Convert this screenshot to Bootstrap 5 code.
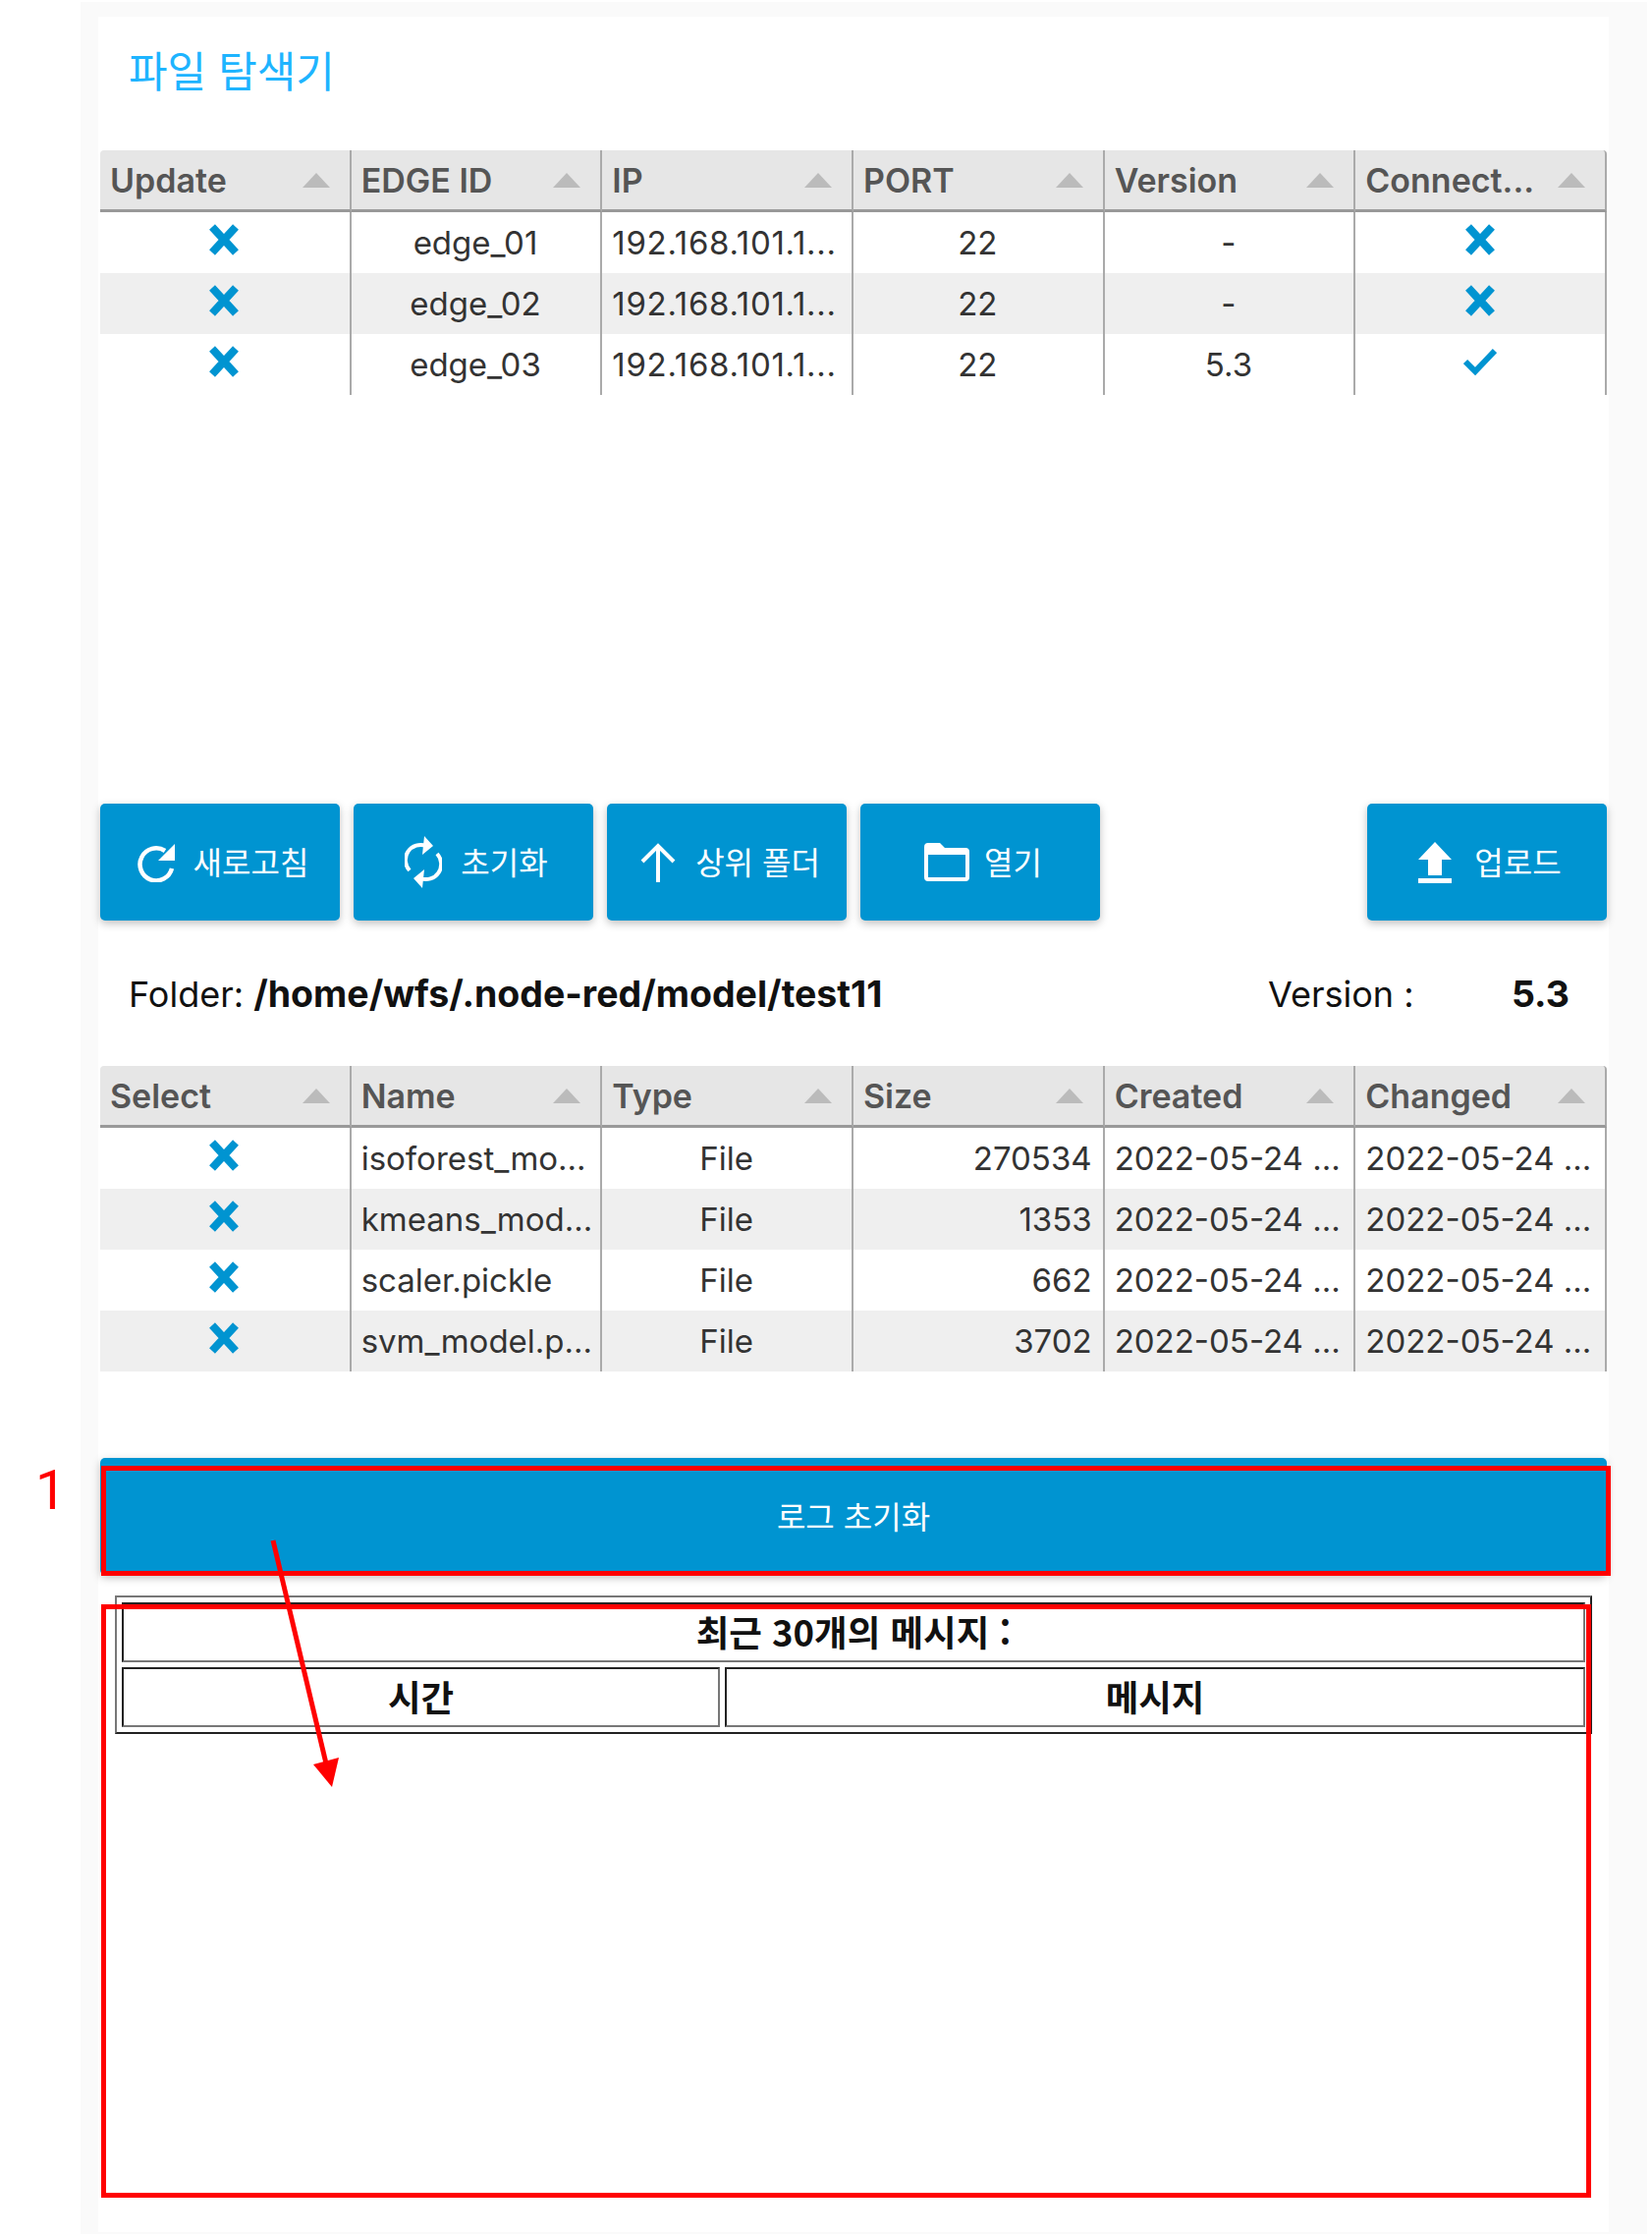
<!DOCTYPE html>
<html lang="ko">
  <head>
    <meta charset="UTF-8" />
    <meta name="viewport" content="width=device-width, initial-scale=1.0" />
    <title>파일 탐색기</title>
    <link
      rel="stylesheet"
      href="https://cdn.jsdelivr.net/npm/bootstrap@5.3.0/dist/css/bootstrap.min.css"
    />
    <style>
      html, body { height: 2277px; overflow: hidden; }
      body {
        position: relative;
        background: #fff;
        font-family: Inter, "Noto Sans CJK KR", sans-serif;
        color: #111;
      }
      .panel-shell { margin: 2px 5px 3px 82px; height: 2272px; padding: 15px 39px 2px 18px; background: #fafafa; }
      .panel-inner { background: #fff; height: 100%; padding: 0 2px 0 2px; }
      .title-text { height: 136px; padding: 28px 0 0 29px; margin: 0; color: #1eb4ff; font-size: 43px; font-weight: 400; font-family: "Noto Sans CJK KR", sans-serif; }
      .grid-table { width: 100%; table-layout: fixed; margin: 0; border-collapse: separate; border-spacing: 0; font-size: 33px; }
      .grid-table th {
        height: 63px; padding: 0 11px 0 10px; background: #e6e6e6; color: #555; font-weight: 600; font-size: 34px;
        border-right: 2px solid #aaa; border-bottom: 3px solid #999; white-space: nowrap;
      }
      .grid-table th:first-child { border-top-left-radius: 4px; }
      .grid-table th:last-child { border-top-right-radius: 4px; }
      .grid-table td { height: 62px; padding: 2px 11px 0 10px; color: #333; border-right: 2px solid #aaa; white-space: nowrap; overflow: hidden; }
      .grid-table tr:nth-child(even) td { background: #efefef; }
      .grid-table .ip-cell { letter-spacing: .7px; }
      .grid-top { height: 249px; margin-bottom: 416px; }
      .sort-mark { width: 0; height: 0; flex: none; margin-right: 9px; border-left: 14px solid transparent; border-right: 14px solid transparent; border-bottom: 15px solid #bbb; }
      .state-icon { display: block; margin: -9px auto 0; width: 34px; height: 34px; }
      .tool-btn {
        width: 244px; height: 119px; border: 0; border-radius: 5px; background: #0094d1; color: #fff; padding: 0 0 3px;
        font-size: 32px; font-family: "Noto Sans CJK KR", sans-serif; box-shadow: 0 3px 8px rgba(0, 0, 0, .25);
      }
      .tool-btn.icon-btn { gap: 19px; padding: 0 0 3px 6px; }
      .tool-btn.icon-btn.gap-narrow { gap: 15px; }
      .tool-btn.icon-btn.gap-wide { gap: 23px; }
      .tool-btn svg { flex: none; margin-top: 3px; }
      .tool-row { gap: 14px; }
      .folder-line { height: 148px; padding: 2px 38px 0 29px; font-size: 36px; }
      .folder-line b { font-size: 37.5px; }
      .version-key { width: 248px; }
      .wide-btn { height: 119px; width: 100%; margin-top: 88px; }
      .log-table { width: calc(100% - 30px); margin: 21px 0 0 15px; border: 2px outset #777; border-collapse: separate; border-spacing: 5px; font-size: 36.5px; font-weight: 700; font-family: "Noto Sans CJK KR", sans-serif; }
      .log-table td { height: 61px; padding: 0; text-align: center; border: 2px inset #777; line-height: 1; }
      .log-table .time-col { width: 609px; }
      .note-num { position: absolute; left: 36px; top: 1484px; color: #f00; font: 56px Roboto, sans-serif; }
      .note-box { position: absolute; border: 5px solid #f00; }
      .note-box.first { left: 103px; top: 1492px; width: 1537px; height: 112px; }
      .note-box.second { left: 103px; top: 1633px; width: 1517px; height: 604px; }
      .note-arrow { position: absolute; left: 0; top: 0; }
    </style>
  </head>
  <body>
    <div class="panel-shell">
      <div class="panel-inner">
        <h1 class="title-text">파일 탐색기</h1>

        <div class="grid-top">
          <table class="grid-table">
            <thead>
              <tr>
                <th><div class="d-flex justify-content-between align-items-center">Update<span class="sort-mark"></span></div></th>
                <th><div class="d-flex justify-content-between align-items-center">EDGE ID<span class="sort-mark"></span></div></th>
                <th><div class="d-flex justify-content-between align-items-center">IP<span class="sort-mark"></span></div></th>
                <th><div class="d-flex justify-content-between align-items-center">PORT<span class="sort-mark"></span></div></th>
                <th><div class="d-flex justify-content-between align-items-center">Version<span class="sort-mark"></span></div></th>
                <th><div class="d-flex justify-content-between align-items-center">Connect...<span class="sort-mark"></span></div></th>
              </tr>
            </thead>
            <tbody>
              <tr>
                <td><svg class="state-icon" viewBox="0 0 34 34"><path d="M5 4 29 30M29 4 5 30" fill="none" stroke="#0094d1" stroke-width="8" /></svg></td>
                <td class="text-center">edge_01</td><td class="ip-cell">192.168.101.1...</td><td class="text-center">22</td><td class="text-center">-</td>
                <td><svg class="state-icon" viewBox="0 0 34 34"><path d="M5 4 29 30M29 4 5 30" fill="none" stroke="#0094d1" stroke-width="8" /></svg></td>
              </tr>
              <tr>
                <td><svg class="state-icon" viewBox="0 0 34 34"><path d="M5 4 29 30M29 4 5 30" fill="none" stroke="#0094d1" stroke-width="8" /></svg></td>
                <td class="text-center">edge_02</td><td class="ip-cell">192.168.101.1...</td><td class="text-center">22</td><td class="text-center">-</td>
                <td><svg class="state-icon" viewBox="0 0 34 34"><path d="M5 4 29 30M29 4 5 30" fill="none" stroke="#0094d1" stroke-width="8" /></svg></td>
              </tr>
              <tr>
                <td><svg class="state-icon" viewBox="0 0 34 34"><path d="M5 4 29 30M29 4 5 30" fill="none" stroke="#0094d1" stroke-width="8" /></svg></td>
                <td class="text-center">edge_03</td><td class="ip-cell">192.168.101.1...</td><td class="text-center">22</td><td class="text-center">5.3</td>
                <td><svg class="state-icon" viewBox="0 0 34 34"><path d="M2 17 12 27 32 6" fill="none" stroke="#0094d1" stroke-width="6" /></svg></td>
              </tr>
            </tbody>
          </table>
        </div>

        <div class="d-flex tool-row">
          <button class="btn tool-btn icon-btn d-flex align-items-center justify-content-center">
            <svg width="38" height="40" viewBox="0 0 38 40"><path d="M35 26A16.500 16.500 0 1 1 28 8" fill="none" stroke="#fff" stroke-width="4.500" /><path d="M38 1V18H21Z" fill="#fff" /></svg>새로고침
          </button>
          <button class="btn tool-btn icon-btn d-flex align-items-center justify-content-center">
            <svg width="38" height="53" viewBox="0 0 38 53"><path d="M5 35A15.500 15.500 0 0 1 22 10M33 18A15.500 15.500 0 0 1 16 43" fill="none" stroke="#fff" stroke-width="4" /><path d="M20 0 29 10 18 19ZM18 53 9 43 20 34Z" fill="#fff" /></svg>초기화
          </button>
          <button class="btn tool-btn icon-btn d-flex align-items-center justify-content-center">
            <svg width="38" height="40" viewBox="0 0 38 40"><path d="M19 40V3M3 19 19 3 35 19" fill="none" stroke="#fff" stroke-width="4" /></svg>상위 폴더
          </button>
          <button class="btn tool-btn icon-btn gap-narrow d-flex align-items-center justify-content-center">
            <svg width="46" height="39" viewBox="0 0 46 39"><path d="M0 12V4q0-4 4-4h12l5 5h21q4 0 4 4v3Z" fill="#fff" /><path d="M2 9V35q0 2 2 2H42q2 0 2-2V9" fill="none" stroke="#fff" stroke-width="4" /></svg>열기
          </button>
          <button class="btn tool-btn icon-btn gap-wide d-flex align-items-center justify-content-center ms-auto">
            <svg width="34" height="42" viewBox="0 0 34 42"><path d="M17 0 34 18H24V34H10V18H0ZM0 37H34V42H0Z" fill="#fff" /></svg>업로드
          </button>
        </div>

        <div class="folder-line d-flex align-items-center">
          <span>Folder:&nbsp;<b>/home/wfs/.node-red/model/test11</b></span>
          <span class="ms-auto version-key">Version :</span>
          <b>5.3</b>
        </div>

        <table class="grid-table">
          <thead>
            <tr>
              <th><div class="d-flex justify-content-between align-items-center">Select<span class="sort-mark"></span></div></th>
              <th><div class="d-flex justify-content-between align-items-center">Name<span class="sort-mark"></span></div></th>
              <th><div class="d-flex justify-content-between align-items-center">Type<span class="sort-mark"></span></div></th>
              <th><div class="d-flex justify-content-between align-items-center">Size<span class="sort-mark"></span></div></th>
              <th><div class="d-flex justify-content-between align-items-center">Created<span class="sort-mark"></span></div></th>
              <th><div class="d-flex justify-content-between align-items-center">Changed<span class="sort-mark"></span></div></th>
            </tr>
          </thead>
          <tbody>
            <tr>
              <td><svg class="state-icon" viewBox="0 0 34 34"><path d="M5 4 29 30M29 4 5 30" fill="none" stroke="#0094d1" stroke-width="8" /></svg></td>
              <td>isoforest_mo...</td><td class="text-center">File</td><td class="text-end">270534</td><td>2022-05-24 ...</td><td>2022-05-24 ...</td>
            </tr>
            <tr>
              <td><svg class="state-icon" viewBox="0 0 34 34"><path d="M5 4 29 30M29 4 5 30" fill="none" stroke="#0094d1" stroke-width="8" /></svg></td>
              <td>kmeans_mod...</td><td class="text-center">File</td><td class="text-end">1353</td><td>2022-05-24 ...</td><td>2022-05-24 ...</td>
            </tr>
            <tr>
              <td><svg class="state-icon" viewBox="0 0 34 34"><path d="M5 4 29 30M29 4 5 30" fill="none" stroke="#0094d1" stroke-width="8" /></svg></td>
              <td>scaler.pickle</td><td class="text-center">File</td><td class="text-end">662</td><td>2022-05-24 ...</td><td>2022-05-24 ...</td>
            </tr>
            <tr>
              <td><svg class="state-icon" viewBox="0 0 34 34"><path d="M5 4 29 30M29 4 5 30" fill="none" stroke="#0094d1" stroke-width="8" /></svg></td>
              <td>svm_model.p...</td><td class="text-center">File</td><td class="text-end">3702</td><td>2022-05-24 ...</td><td>2022-05-24 ...</td>
            </tr>
          </tbody>
        </table>

        <button class="btn tool-btn wide-btn">로그 초기화</button>

        <table class="log-table">
          <tr><td colspan="2">최근 30개의 메시지 :</td></tr>
          <tr><td class="time-col">시간</td><td>메시지</td></tr>
        </table>
      </div>
    </div>

    <!-- 주석 표시 -->
    <div class="note-num">1</div>
    <div class="note-box first"></div>
    <div class="note-box second"></div>
    <svg class="note-arrow" width="1682" height="2277"><path d="M278 1568 332 1795" stroke="#f00" stroke-width="5" /><path d="M338 1819 319 1796 345 1789Z" fill="#f00" /></svg>
  </body>
</html>
